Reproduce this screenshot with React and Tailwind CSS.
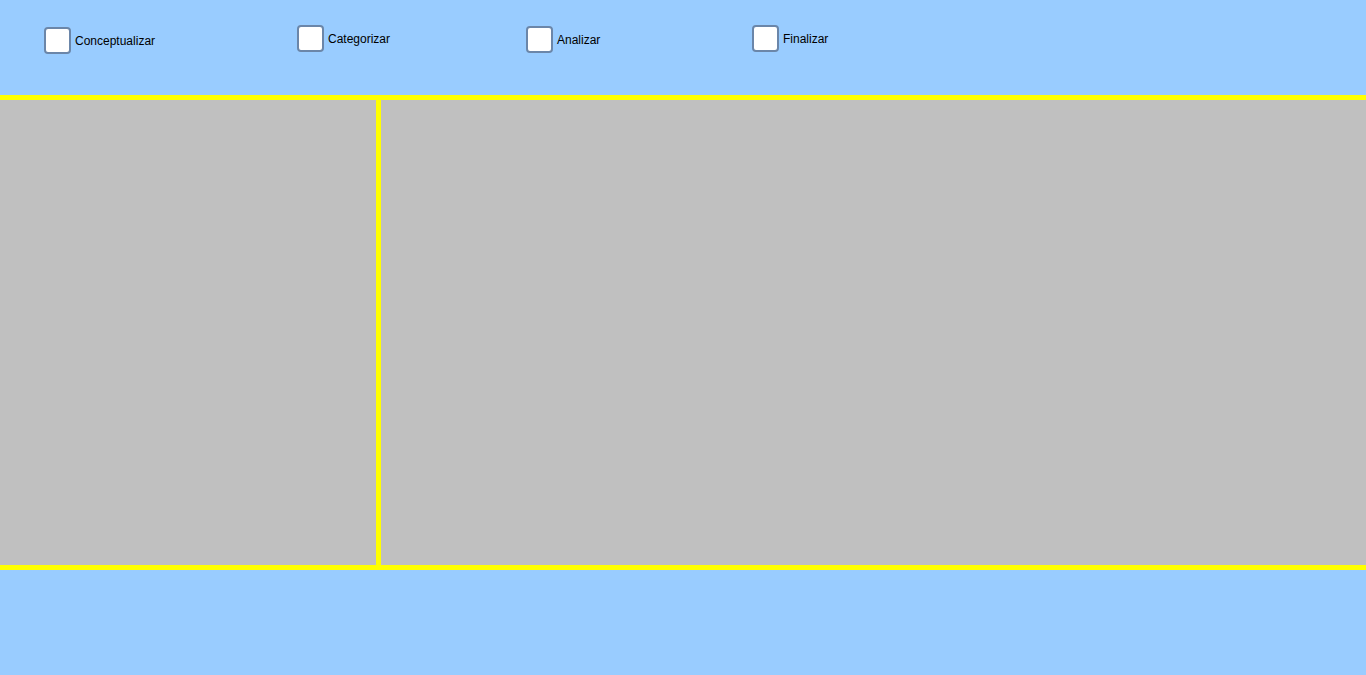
export default function App() {
  const items = [
    { label: "Conceptualizar", w: "w-[253px]", mt: "mt-[27px]", tmt: "mt-[8px]" },
    { label: "Categorizar", w: "w-[229px]", mt: "mt-[25px]", tmt: "mt-[8px]" },
    { label: "Analizar", w: "w-[226px]", mt: "mt-[26px]", tmt: "mt-[8px]" },
    { label: "Finalizar", w: "w-[200px]", mt: "mt-[25px]", tmt: "mt-[8px]" },
  ];
  return (
    <div className="w-[1366px] h-[675px] bg-[#99ccff] flex flex-col overflow-hidden" style={{ fontFamily: '"Liberation Sans", Arial, sans-serif' }}>
      <div className="h-[95px] flex items-start pl-[44px]">
        {items.map((it) => (
          <div key={it.label} className={`${it.w} ${it.mt} flex items-start`}>
            <div className="w-[27px] h-[27px] bg-white border-2 border-[#6b86a9] rounded-[4px] shrink-0" />
            <span className={`ml-[4px] text-[12px] leading-[12px] text-black ${it.tmt}`}>{it.label}</span>
          </div>
        ))}
      </div>
      <div className="h-[475px] border-y-[5px] border-[#ffff00] bg-[#c0c0c0] flex">
        <div className="w-[376px]" />
        <div className="w-[5px] bg-[#ffff00]" />
        <div className="flex-1" />
      </div>
      <div className="flex-1" />
    </div>
  );
}
